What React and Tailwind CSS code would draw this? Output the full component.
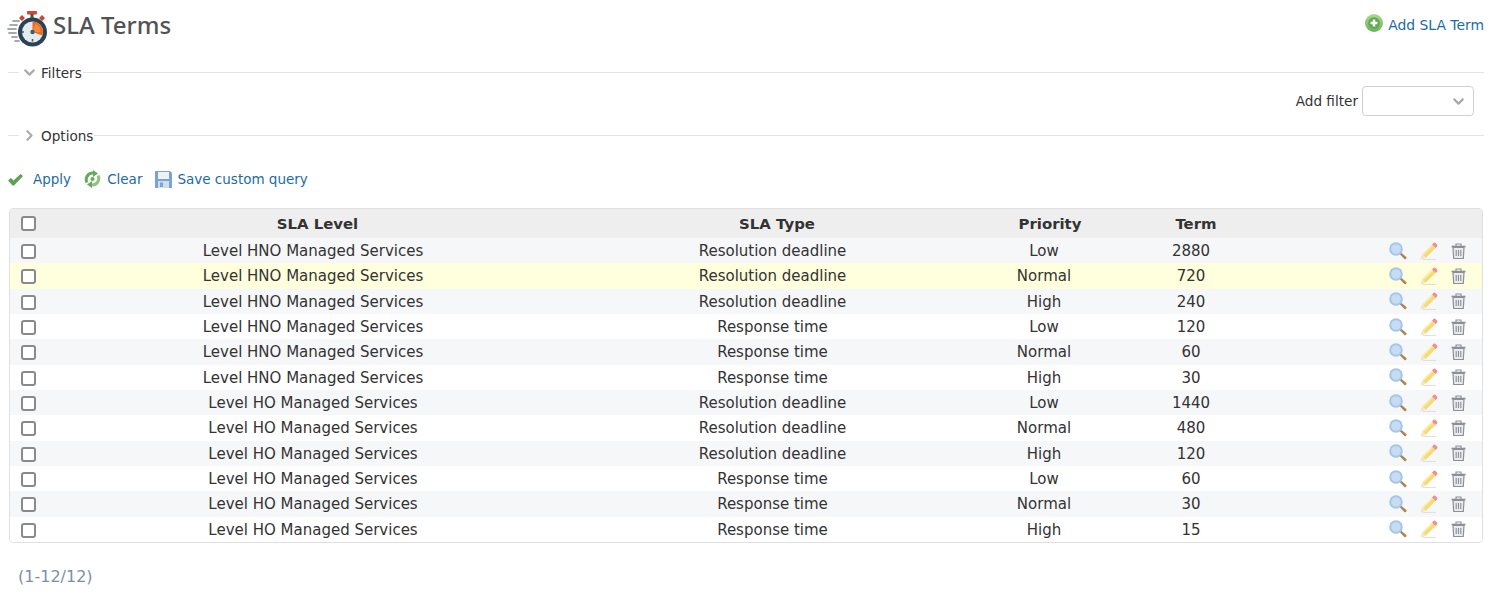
import React from 'react';
import { ChevronDown, ChevronRight } from 'lucide-react';

const rows = [
  ['Level HNO Managed Services', 'Resolution deadline', 'Low', '2880'],
  ['Level HNO Managed Services', 'Resolution deadline', 'Normal', '720'],
  ['Level HNO Managed Services', 'Resolution deadline', 'High', '240'],
  ['Level HNO Managed Services', 'Response time', 'Low', '120'],
  ['Level HNO Managed Services', 'Response time', 'Normal', '60'],
  ['Level HNO Managed Services', 'Response time', 'High', '30'],
  ['Level HO Managed Services', 'Resolution deadline', 'Low', '1440'],
  ['Level HO Managed Services', 'Resolution deadline', 'Normal', '480'],
  ['Level HO Managed Services', 'Resolution deadline', 'High', '120'],
  ['Level HO Managed Services', 'Response time', 'Low', '60'],
  ['Level HO Managed Services', 'Response time', 'Normal', '30'],
  ['Level HO Managed Services', 'Response time', 'High', '15'],
];

function rowColor(i) {
  if (i === 1) return 'bg-[#ffffdd]';
  if (i === 0 || i === 2 || i === 4 || i === 6 || i === 8 || i === 10) return 'bg-[#f6f7f9]';
  return 'bg-white';
}

function StopwatchIcon() {
  return (
    <svg width="42" height="38" viewBox="0 0 42 38" className="shrink-0 blur-[0.3px]">
      <g stroke="#8a8f92" strokeWidth="1.700" strokeLinecap="round">
        <path d="M6 12h6M3 16h7M1 20h8M2 24h7M5 28h5M8 32h4" />
      </g>
      <rect x="20" y="2" width="10" height="3.500" rx="1" fill="#d8432f" />
      <rect x="23.500" y="5" width="3" height="4" fill="#4a5157" />
      <path d="M12 9l3-3 3 3-3 3zM38 9l-3-3-3 3 3 3z" fill="#c9452f" />
      <circle cx="25.500" cy="23" r="14.500" fill="#2b4254" />
      <circle cx="25.500" cy="23" r="10.500" fill="#e3ebef" />
      <path d="M25.500 23V12.500a10.500 10.500 0 0 1 9.800 14z" fill="#ee6a22" />
      <path d="M25.500 23l3-8a8 8 0 0 1 5 8z" fill="#f58a3c" />
      <circle cx="25.500" cy="23" r="2.200" fill="#41596b" />
      <path d="M25.500 30v2.500M17 23h-2" stroke="#41596b" strokeWidth="1.500" />
    </svg>
  );
}

function AddIcon() {
  return (
    <svg width="18" height="18" viewBox="0 0 18 18" className="blur-[0.3px]">
      <defs>
        <linearGradient id="addGreen" x1="0" y1="0" x2="0" y2="1">
          <stop offset="0" stopColor="#a9d894" />
          <stop offset="1" stopColor="#6cb25c" />
        </linearGradient>
      </defs>
      <circle cx="9" cy="9" r="9" fill="url(#addGreen)" />
      <circle cx="9" cy="9" r="5.800" fill="#5ea84f" />
      <path d="M9 5.500v7M5.500 9h7" stroke="#fff" strokeWidth="2.500" />
    </svg>
  );
}

function CheckIcon() {
  return (
    <svg width="15" height="13" viewBox="0 0 15 13" className="blur-[0.2px]">
      <path d="M0 7.500L3 5l2.500 2.500L12.500 1 15 3 6 12.500H4.500z" fill="#5aa44d" />
    </svg>
  );
}

function ClearIcon() {
  return (
    <svg width="17" height="18" viewBox="0 0 17 18" fill="none" className="blur-[0.2px]">
      <path d="M3 12.500A6.500 6.500 0 0 1 8 3h2" stroke="#66ab59" strokeWidth="3" />
      <path d="M9 0l5 3.500L9 7z" fill="#66ab59" />
      <path d="M14 5.500A6.500 6.500 0 0 1 9 15H7" stroke="#8cc47e" strokeWidth="3" />
      <path d="M8 18l-5-3.500L8 11z" fill="#66ab59" />
      <circle cx="8.500" cy="9" r="2" fill="#66ab59" />
    </svg>
  );
}

function SaveIcon() {
  return (
    <svg width="17" height="17" viewBox="0 0 17 17" className="blur-[0.3px]">
      <path d="M0 0h15l2 2v15H0z" fill="#79a3d6" />
      <rect x="3" y="1" width="11" height="7" fill="#edf2f8" />
      <rect x="3" y="10" width="11" height="7" fill="#d0dded" />
      <rect x="5" y="11.500" width="3" height="4.500" fill="#7da5d4" />
    </svg>
  );
}

function ViewIcon() {
  return (
    <svg width="18" height="18" viewBox="0 0 18 18" className="blur-[0.3px]">
      <path d="M10.500 12l1.500-1.500 5.300 4.500c.9 1.300-.6 2.800-1.900 2z" fill="#b08352" />
      <circle cx="7" cy="7" r="6.800" fill="#a5c6ea" />
      <circle cx="7" cy="7" r="4.800" fill="#c5dcf3" />
    </svg>
  );
}

function EditIcon() {
  return (
    <svg width="18" height="18" viewBox="0 0 18 18" className="blur-[0.3px]">
      <path d="M3 17.500h13" stroke="#dfe1df" strokeWidth="1.200" />
      <path d="M0.500 17.500l2-5.500 9.500-9.500 3.500 3.500L6 15.500z" fill="#f6da74" />
      <path d="M2.500 12l9.500-9.500 1 1L3.500 13z" fill="#fcefb4" />
      <path d="M0.500 17.500l2-5.500 3.500 3.500z" fill="#f3e6c4" />
      <path d="M12 2.500l1.500-1.500c.8-.7 1.400-.6 2 0l1.500 1.500c.6.600.6 1.300 0 2L15.500 6z" fill="#f28d92" />
    </svg>
  );
}

function TrashIcon() {
  return (
    <svg width="15" height="16" viewBox="0 0 15 16" fill="none" className="blur-[0.3px]">
      <path d="M0.500 3.500h14" stroke="#8b8f97" strokeWidth="1.600" />
      <path d="M5 3V1h5v2" stroke="#8b8f97" strokeWidth="1.100" />
      <path d="M2 4.500h11l-.7 11H2.700z" fill="#e9eaed" stroke="#8b8f97" strokeWidth="1.200" />
      <path d="M5.200 7v6M7.500 7v6M9.800 7v6" stroke="#8b8f97" strokeWidth="1.100" />
    </svg>
  );
}

function Box() {
  return <span className="block w-[15px] h-[15px] bg-white border-2 border-[#8a8a8a] rounded-[3px]" />;
}

function Legend({ label, open }) {
  return (
    <div className="flex items-center h-4 ml-2 mr-2">
      <div className="w-[11px] h-px bg-[#e3e3e3]" />
      <span className="w-[20px] flex justify-center text-[#ababab]">
        {open ? <ChevronDown size={17} strokeWidth={3} /> : <ChevronRight size={17} strokeWidth={3} />}
      </span>
      <span className="text-[#333] text-[13.600px] pt-[2px] ml-[2px]">{label}</span>
      <div className="flex-1 h-px bg-[#e3e3e3] ml-px" />
    </div>
  );
}

const cols = 'grid grid-cols-[26px_554px_365px_190px_102px_1fr] items-center text-center';

export default function App() {
  return (
    <div className="bg-white min-h-[599px] text-[15px] text-[#333] font-['DejaVu_Sans',sans-serif]">
      <div className="flex justify-between h-[64px]">
        <div className="flex items-start pl-[7px] pt-[9px]">
          <StopwatchIcon />
          <h1 className="text-[24px] leading-[38px] font-medium text-[#505458] ml-[4px] -mt-[3px] font-['Noto_Sans',sans-serif]">SLA Terms</h1>
        </div>
        <div className="flex items-start pt-[14px] pr-2 text-[#1d6ba8] text-[13.900px]">
          <AddIcon />
          <span className="ml-[5px] leading-[20px] pt-[0.5px]">Add SLA Term</span>
        </div>
      </div>

      <Legend label="Filters" open />
      <div className="flex justify-end items-center h-[30px] mt-[6px] pr-[18px] text-[13.600px]">
        <span className="mr-1">Add filter</span>
        <div className="w-[112px] h-[30px] border border-[#cfcfcf] rounded flex items-center justify-end pr-[6px] text-[#a8a8a8]">
          <ChevronDown size={17} strokeWidth={3} />
        </div>
      </div>

      <div className="mt-[11px]">
        <Legend label="Options" />
      </div>

      <div className="flex items-center h-5 mt-[26px] ml-2 text-[#1d6ba8] text-[13.500px]">
        <CheckIcon />
        <span className="ml-[10px]">Apply</span>
        <span className="ml-[13px]"><ClearIcon /></span>
        <span className="ml-[6px]">Clear</span>
        <span className="ml-[13px]"><SaveIcon /></span>
        <span className="ml-[5px]">Save custom query</span>
      </div>

      <div className="mt-[19px] mx-[9px] w-[1474px] border border-[#e0e0e0] rounded overflow-hidden">
        <div className={`${cols} h-[29px] pt-[1px] bg-[#eeeeee] font-bold text-[14.900px]`}>
          <span className="pl-[11px] -mt-[1px]"><Box /></span>
          <span className="pl-[9px]">SLA Level</span>
          <span className="pl-[9px]">SLA Type</span>
          <span>Priority</span>
          <span>Term</span>
          <span />
        </div>
        {rows.map((row, i) => (
          <div key={i} className={`${cols} h-[25.330px] pt-[1px] ${rowColor(i)}`}>
            <span className="pl-[11px] pt-[1px]"><Box /></span>
            <span>{row[0]}</span>
            <span>{row[1]}</span>
            <span className="pr-[12px]">{row[2]}</span>
            <span className="pr-[10px]">{row[3]}</span>
            <div className="flex items-center justify-end pr-[16px] -mt-[1px]">
              <ViewIcon />
              <span className="ml-[13px]"><EditIcon /></span>
              <span className="ml-[13px]"><TrashIcon /></span>
            </div>
          </div>
        ))}
      </div>

      <div className="mt-[22px] ml-[18px] text-[#7d8fa3] text-[16px]">(1-12/12)</div>
    </div>
  );
}
